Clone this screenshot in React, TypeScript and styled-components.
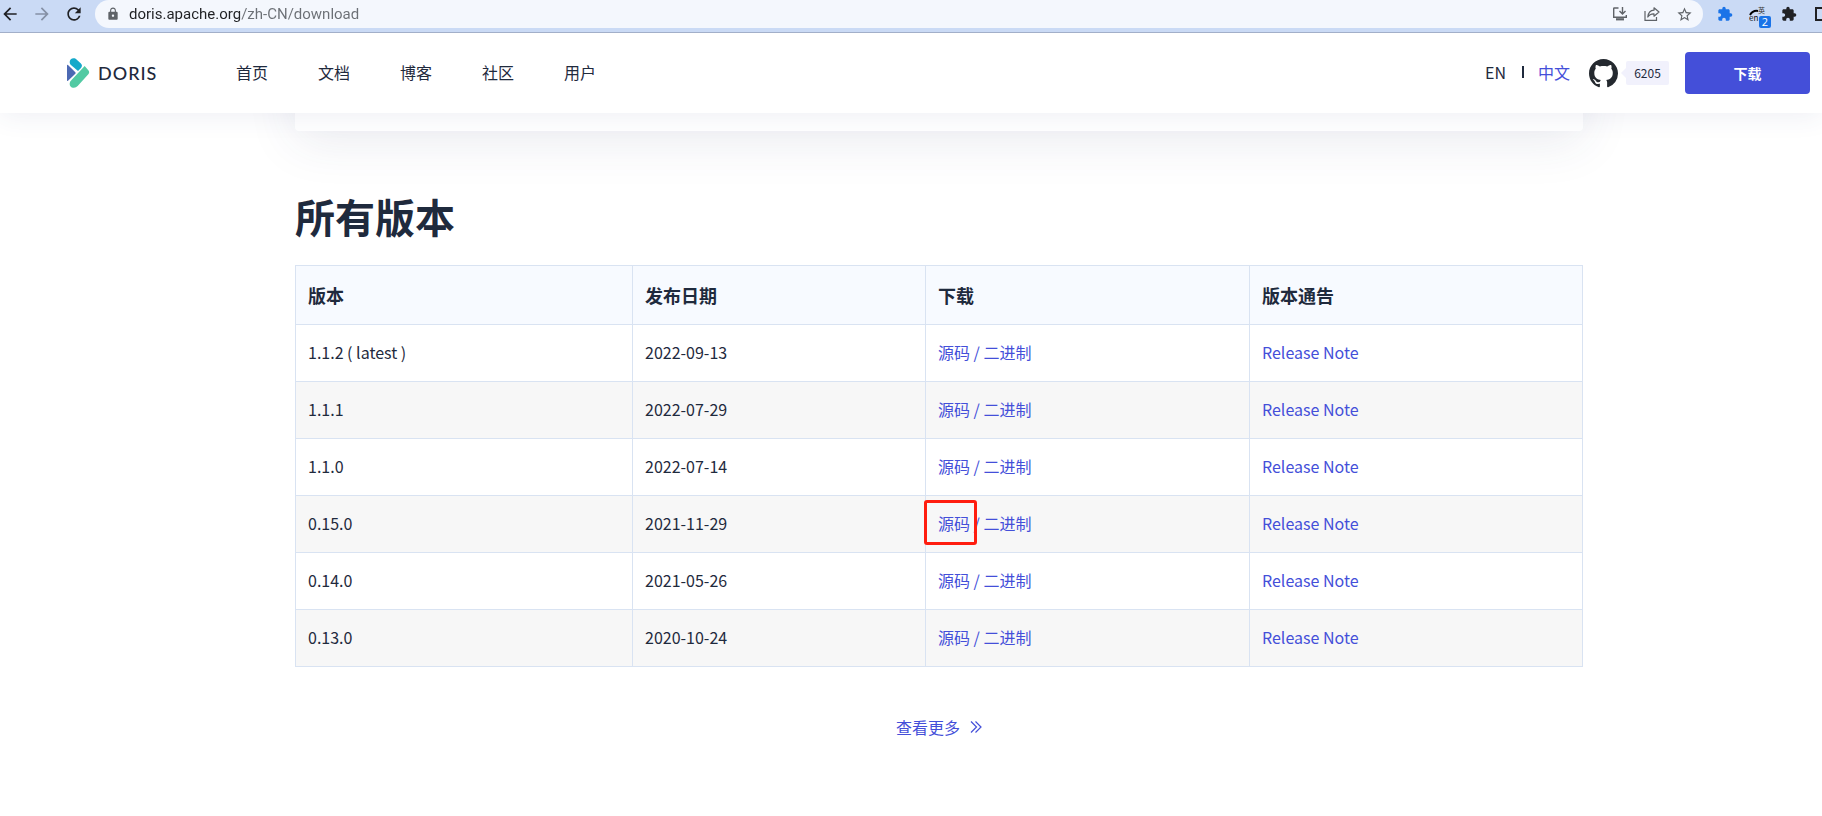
import React from "react";
import styled, { createGlobalStyle } from "styled-components";
import {
  MdArrowBack,
  MdArrowForward,
  MdRefresh,
  MdLock,
  MdStarBorder,
  MdExtension,
} from "react-icons/md";

const ink = "#1f2a3d";
const brand = "#444fd9";
const line = "#d9e3f2";

const GlobalStyle = createGlobalStyle`
  *, *::before, *::after { box-sizing: border-box; }
  body {
    margin: 0;
    overflow-x: hidden;
    background: #fff;
    color: ${ink};
    font: 16px/24px "Noto Sans CJK SC", sans-serif;
  }
  a { color: inherit; text-decoration: none; }
  button { font: inherit; border: 0; padding: 0; background: none; cursor: pointer; }
  svg { display: block; flex: none; }
`;

const BrowserBar = styled.div`
  position: relative;
  z-index: 2;
  display: flex;
  align-items: flex-start;
  height: 33px;
  overflow: hidden;
  background: #cadaf5;
  border-bottom: 1px solid #a2afc9;
`;

const NavButtons = styled.div`
  display: flex;
  gap: 12px;
  width: 95px;
  flex: none;
  padding-top: 4px;
`;

const ToolButton = styled.button<{ $color?: string }>`
  display: flex;
  flex: none;
  color: ${(p) => p.$color ?? "#202124"};
`;

const AddressBar = styled.label`
  display: flex;
  align-items: center;
  flex: 1;
  min-width: 0;
  height: 28px;
  padding: 0 10px 0 11px;
  gap: 9px;
  border-radius: 14px;
  background: #f4f7fd;
  color: #5f6368;
`;

const AddressInput = styled.input`
  flex: 1;
  min-width: 0;
  height: 28px;
  border: 0;
  outline: 0;
  padding: 0;
  font: 15px/28px Roboto, "Open Sans", sans-serif;
  color: transparent;
  background: linear-gradient(to right, #202124 111px, #6b6f75 111px);
  background-clip: text;
  -webkit-background-clip: text;
`;

const AddressActions = styled.div`
  display: flex;
  align-items: center;
  gap: 16px;
`;

const Extensions = styled.div`
  display: flex;
  gap: 16px;
  width: 119px;
  flex: none;
  padding: 6px 0 0 14px;
`;

const TranslateButton = styled(ToolButton)`
  position: relative;
  width: 16px;
  height: 16px;
`;

const TranslateBadge = styled.span`
  position: absolute;
  left: 10px;
  top: 10px;
  width: 12px;
  height: 12px;
  border-radius: 2px;
  background: #1a73e8;
  color: #fff;
  font: 11px/12px "Open Sans", sans-serif;
  text-align: center;
`;

const SiteHeader = styled.header`
  position: relative;
  z-index: 1;
  display: flex;
  align-items: center;
  height: 80px;
  padding: 0 12px 0 67px;
  background: #fff;
  box-shadow: 0 4px 24px rgba(45, 60, 130, 0.08);
`;

const Brand = styled.a`
  display: flex;
  align-items: center;
  gap: 8px;
  width: 169px;
  font: 500 18px/24px Lato, sans-serif;
  letter-spacing: 1px;
`;

const MainNav = styled.nav`
  display: flex;
  gap: 50px;
  flex: 1;
  padding-bottom: 2px;
`;

const Languages = styled.div`
  display: flex;
  align-items: center;
  margin-right: 19px;
  padding-bottom: 2px;
`;

const Divider = styled.span`
  width: 2px;
  height: 12px;
  margin: 0 14px 0 16px;
  background: ${ink};
`;

const Blue = styled.a`
  color: ${brand};
`;

const GithubLink = styled.a`
  display: flex;
  align-items: center;
  gap: 8px;
  margin-right: 16px;
  color: #24292f;
`;

const Stars = styled.span`
  position: relative;
  width: 43px;
  height: 24px;
  border-radius: 2px;
  background: #f1f1fc;
  color: ${ink};
  font-size: 12px;
  line-height: 24px;
  text-align: center;
  &::before {
    content: "";
    position: absolute;
    left: -5px;
    top: 7px;
    border: 5px solid transparent;
    border-left: 0;
    border-right-color: #f1f1fc;
  }
`;

const DownloadButton = styled.button`
  && {
    width: 125px;
    height: 42px;
    border-radius: 4px;
    background: ${brand};
    color: #fff;
    font-size: 14px;
    font-weight: 700;
  }
`;

const Page = styled.div`
  padding-left: 56px;
`;

const Content = styled.main`
  display: flex;
  flex-direction: column;
  max-width: 1288px;
  margin: 0 auto;
`;

const PreviousCard = styled.section`
  height: 118px;
  margin-top: -100px;
  border-radius: 4px;
  background: #fff;
  box-shadow: 0 10px 50px rgba(45, 60, 110, 0.1);
`;

const Title = styled.h1`
  margin: 55px 0 19px;
  font-size: 40px;
  line-height: 60px;
  font-weight: 700;
`;

const Versions = styled.table`
  width: 100%;
  table-layout: fixed;
  border-collapse: collapse;
  th,
  td {
    height: 57px;
    padding: 0 12px 2px;
    border: 1px solid ${line};
    text-align: left;
  }
  th {
    height: 59px;
    padding-bottom: 0;
    background: #f7faff;
    font-size: 18px;
    font-weight: 700;
  }
  th:nth-child(1) { width: 337px; }
  th:nth-child(2) { width: 293px; }
  th:nth-child(3) { width: 324px; }
  tbody tr:nth-child(even) { background: #f7f7f7; }
`;

const Marked = styled.span`
  position: relative;
  &::after {
    content: "";
    position: absolute;
    inset: -11px -7px -10px -14px;
    border: 3px solid #ff1d0f;
    border-radius: 3px;
    pointer-events: none;
  }
`;

const More = styled.a`
  display: flex;
  align-items: center;
  align-self: center;
  gap: 10px;
  margin: 48px 0 77px;
  color: ${brand};
`;

const DorisLogo = () => (
  <svg width="23" height="30" viewBox="0 0 69 90" aria-hidden="true">
    <path d="M0 22q0-3 3-1l22 22q2 2 0 4L3 68q-3 2-3-1z" fill="#4c69b3" />
    <path d="M8 12C8 3 17-2 26 2L41 16q7 7 1 14l-9 9L11 20Q8 17 8 12Z" fill="#15a9ca" />
    <path d="M53 24l11 13q5 6 0 12L32 84q-6 7-15 5-9-3-9-12 0-6 5-10z" fill="#52caa3" />
  </svg>
);

const GithubMark = () => (
  <svg width="29" height="29" viewBox="0 0 16 16" fill="currentColor" aria-hidden="true">
    <path d="M8 0C3.58 0 0 3.58 0 8c0 3.54 2.29 6.53 5.47 7.59.4.07.55-.17.55-.38 0-.19-.01-.82-.01-1.49-2.01.37-2.53-.49-2.69-.94-.09-.23-.48-.94-.82-1.13-.28-.15-.68-.52-.01-.53.63-.01 1.08.58 1.23.82.72 1.21 1.87.87 2.33.66.07-.52.28-.87.51-1.07-1.78-.2-3.64-.89-3.64-3.95 0-.87.31-1.59.82-2.15-.08-.2-.36-1.02.08-2.12 0 0 .67-.21 2.2.82.64-.18 1.32-.27 2-.27s1.36.09 2 .27c1.53-1.04 2.2-.82 2.2-.82.44 1.1.16 1.92.08 2.12.51.56.82 1.27.82 2.15 0 3.07-1.87 3.75-3.65 3.95.29.25.54.73.54 1.48 0 1.07-.01 1.93-.01 2.2 0 .21.15.46.55.38A8.01 8.01 0 0 0 16 8c0-4.42-3.58-8-8-8z" />
  </svg>
);

const InstallIcon = () => (
  <svg width="16" height="16" viewBox="0 0 16 16" fill="none" stroke="currentColor" strokeWidth="1.4" aria-hidden="true">
    <path d="M6.500 2H2.200Q1.700 2 1.700 2.500V11.300H14.300V9" />
    <path d="M10.500 1v6.500M7.500 5l3 3 3-3" />
    <path d="M4 13.300h8" strokeWidth="2.200" />
  </svg>
);

const ShareIcon = () => (
  <svg width="16" height="16" viewBox="0 0 16 16" fill="none" stroke="currentColor" strokeWidth="1.2" aria-hidden="true">
    <path d="M1 5v9.300h11.500V11" />
    <path d="M10 1.800l5 4.200-5 4.200V7.800C7 7.700 5 8.800 3.800 11 4.200 7 6.500 4.400 10 4.200z" strokeLinejoin="round" />
  </svg>
);

const TranslateIcon = () => (
  <svg width="18" height="16" viewBox="0 0 18 16" aria-hidden="true">
    <path d="M1 9Q4 4 9 5" fill="none" stroke="#000" strokeWidth="2" />
    <text x="9" y="7" fontSize="7" fill="#333">英</text>
    <text x="0" y="15" fontSize="8" fill="#111">en</text>
  </svg>
);

const SidePanelIcon = () => (
  <svg width="18" height="16" viewBox="0 0 18 16" fill="none" stroke="currentColor" strokeWidth="2" aria-hidden="true">
    <path d="M3 2h14v12H3z" />
  </svg>
);

const DoubleChevron = () => (
  <svg width="12" height="12" viewBox="0 0 12 12" fill="none" stroke="currentColor" strokeWidth="1.2" aria-hidden="true">
    <path d="M1 .5L6.500 6 1 11.500M5.500 .5L11 6l-5.500 5.500" />
  </svg>
);

const navItems = ["首页", "文档", "博客", "社区", "用户"];

const releases = [
  { version: "1.1.2 ( latest )", date: "2022-09-13" },
  { version: "1.1.1", date: "2022-07-29" },
  { version: "1.1.0", date: "2022-07-14" },
  { version: "0.15.0", date: "2021-11-29", marked: true },
  { version: "0.14.0", date: "2021-05-26" },
  { version: "0.13.0", date: "2020-10-24" },
];

export default function App() {
  return (
    <>
      <GlobalStyle />
      <BrowserBar>
        <NavButtons>
          <ToolButton aria-label="Back"><MdArrowBack size={20} /></ToolButton>
          <ToolButton aria-label="Forward" $color="#8590a5"><MdArrowForward size={20} /></ToolButton>
          <ToolButton aria-label="Reload"><MdRefresh size={20} /></ToolButton>
        </NavButtons>
        <AddressBar>
          <MdLock size={14} />
          <AddressInput aria-label="Address" defaultValue="doris.apache.org/zh-CN/download" />
          <AddressActions>
            <ToolButton aria-label="Install" $color="#5f6368"><InstallIcon /></ToolButton>
            <ToolButton aria-label="Share" $color="#5f6368"><ShareIcon /></ToolButton>
            <ToolButton aria-label="Bookmark" $color="#5f6368"><MdStarBorder size={17} /></ToolButton>
          </AddressActions>
        </AddressBar>
        <Extensions>
          <ToolButton aria-label="Extension" $color="#1a73e8"><MdExtension size={16} /></ToolButton>
          <TranslateButton aria-label="Translate">
            <TranslateIcon />
            <TranslateBadge>2</TranslateBadge>
          </TranslateButton>
          <ToolButton aria-label="Extensions"><MdExtension size={16} /></ToolButton>
          <ToolButton aria-label="Side panel"><SidePanelIcon /></ToolButton>
        </Extensions>
      </BrowserBar>

      <SiteHeader>
        <Brand href="#"><DorisLogo />DORIS</Brand>
        <MainNav>
          {navItems.map((item) => (
            <a href="#" key={item}>{item}</a>
          ))}
        </MainNav>
        <Languages>
          <a href="#">EN</a>
          <Divider />
          <Blue href="#">中文</Blue>
        </Languages>
        <GithubLink href="#" aria-label="GitHub">
          <GithubMark />
          <Stars>6205</Stars>
        </GithubLink>
        <DownloadButton>下载</DownloadButton>
      </SiteHeader>

      <Page>
        <Content>
          <PreviousCard />
          <Title>所有版本</Title>
          <Versions>
            <thead>
              <tr>
                <th>版本</th>
                <th>发布日期</th>
                <th>下载</th>
                <th>版本通告</th>
              </tr>
            </thead>
            <tbody>
              {releases.map(({ version, date, marked }) => (
                <tr key={version}>
                  <td>{version}</td>
                  <td>{date}</td>
                  <td>
                    <Blue as="span">
                      {marked ? <Marked><a href="#">源码</a></Marked> : <a href="#">源码</a>}
                      {" / "}
                      <a href="#">二进制</a>
                    </Blue>
                  </td>
                  <td><Blue href="#">Release Note</Blue></td>
                </tr>
              ))}
            </tbody>
          </Versions>
          <More href="#">查看更多<DoubleChevron /></More>
        </Content>
      </Page>
    </>
  );
}
